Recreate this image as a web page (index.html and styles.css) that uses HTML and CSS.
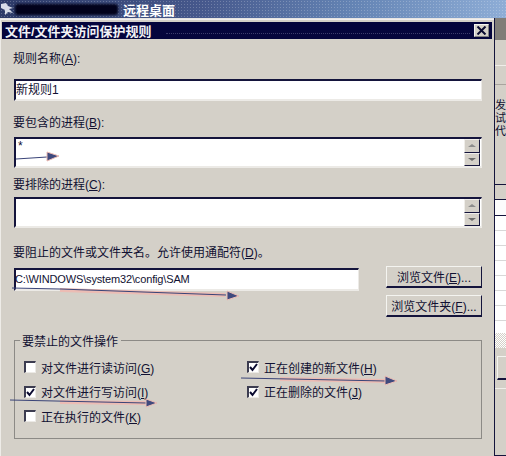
FILE: index.html
```html
<!DOCTYPE html>
<html>
<head>
    <title>文件/文件夹访问保护规则</title>
    <meta name="viewport" content="width=device-width, initial-scale=1.0">
    <link rel="stylesheet" href="styles.css">
</head>
<body>
    <div class="screen">
        <div class="remote-bar">
            <svg class="remote-icon" width="15" height="18" viewBox="0 0 15 18">
                <path d="M1 4 L6 3 L8 6 L13 8 L9 9 L13 13 L8 12 L5 15 L5 10 L1 8 Z" fill="#d8dce8"/>
            </svg>
            <div class="remote-host"></div>
            <span class="remote-title">远程桌面</span>
        </div>

        <div class="desktop">
            <div class="dialog">
                <div class="titlebar">
                    <span class="titlebar-text">文件/文件夹访问保护规则</span>
                    <span class="titlebar-dots"></span>
                    <span class="close-btn">
                        <svg width="11" height="9" viewBox="0 0 11 9">
                            <path d="M1.5 0.5 L9.5 8.5 M9.5 0.5 L1.5 8.5" stroke="#0a0a30" stroke-width="2" fill="none"/>
                        </svg>
                    </span>
                </div>

                <div class="form">
                    <div class="label label-name">规则名称(<u>A</u>):</div>
                    <div class="field field-single">新规则1</div>

                    <div class="label label-include">要包含的进程(<u>B</u>):</div>
                    <div class="field field-multi">
                        <span class="field-text">*</span>
                        <div class="scroll">
                            <span class="scroll-btn"><i class="arrow-up"></i></span>
                            <span class="scroll-btn"><i class="arrow-down"></i></span>
                        </div>
                    </div>

                    <div class="label label-exclude">要排除的进程(<u>C</u>):</div>
                    <div class="field field-multi field-exclude">
                        <span class="field-text"></span>
                        <div class="scroll">
                            <span class="scroll-btn"><i class="arrow-up"></i></span>
                            <span class="scroll-btn"><i class="arrow-down"></i></span>
                        </div>
                    </div>

                    <div class="label label-path">要阻止的文件或文件夹名。允许使用通配符(<u>D</u>)。</div>
                    <div class="path-row">
                        <div class="field field-path">C:\WINDOWS\system32\config\SAM</div>
                        <div class="browse">
                            <button class="btn">浏览文件(<u>E</u>)...</button>
                            <button class="btn">浏览文件夹(<u>F</u>)...</button>
                        </div>
                    </div>

                    <div class="group">
                        <span class="legend">要禁止的文件操作</span>
                        <div class="checks">
                            <div class="check-item"><span class="check"></span><span>对文件进行读访问(<u>G</u>)</span></div>
                            <div class="check-item"><span class="check checked"><svg width="9" height="9" viewBox="0 0 9 9"><path d="M1 4 L3.5 7 L8 1" stroke="#0a0a30" stroke-width="2" fill="none"/></svg></span><span>正在创建的新文件(<u>H</u>)</span></div>
                            <div class="check-item"><span class="check checked"><svg width="9" height="9" viewBox="0 0 9 9"><path d="M1 4 L3.5 7 L8 1" stroke="#0a0a30" stroke-width="2" fill="none"/></svg></span><span>对文件进行写访问(<u>I</u>)</span></div>
                            <div class="check-item"><span class="check checked"><svg width="9" height="9" viewBox="0 0 9 9"><path d="M1 4 L3.5 7 L8 1" stroke="#0a0a30" stroke-width="2" fill="none"/></svg></span><span>正在删除的文件(<u>J</u>)</span></div>
                            <div class="check-item"><span class="check"></span><span>正在执行的文件(<u>K</u>)</span></div>
                        </div>
                    </div>
                </div>
            </div>

            <div class="side">
                <div class="side-title"></div>
                <div class="side-tabs"></div>
                <div class="side-rule"></div>
                <div class="side-text">发<br>试<br>代</div>
                <div class="side-head"></div>
                <div class="side-input"></div>
                <div class="side-list"></div>
                <div class="side-hatch"></div>
                <div class="side-btn"></div>
                <div class="side-foot"></div>
            </div>
        </div>

        <!-- hand drawn arrows on top of the screenshot -->
        <svg class="marks" width="506" height="456" viewBox="0 0 506 456">
            <g class="halo">
                <path d="M60 290 L225 295"/>
                <path d="M60 402 L145 403"/>
                <path d="M280 379 L385 381"/>
            </g>
            <g class="ink">
                <path d="M16 159 L47 157"/>
                <path d="M12 288 L60 289 L226 295"/>
                <path d="M10 400 L146 403"/>
                <path d="M241 378 L386 381"/>
            </g>
            <g class="head">
                <path d="M47 152 L59 156 L47 161 Z"/>
                <path d="M227 291 L239 296 L227 300 Z"/>
                <path d="M146 399 L157 403 L146 407 Z"/>
                <path d="M385 376 L397 381 L385 385 Z"/>
            </g>
        </svg>
    </div>
</body>
</html>
```

FILE: styles.css
```css
* {
    margin: 0;
    padding: 0;
    box-sizing: border-box;
}

body {
    font-family: "Liberation Sans", "Noto Sans CJK SC", sans-serif;
    font-size: 12px;
    color: #111132;
    background: #d4d0c8;
    overflow: hidden;
}

.screen {
    position: relative;
    width: 506px;
    height: 456px;
    overflow: hidden;
}

/* remote desktop strip */
.remote-bar {
    display: flex;
    align-items: center;
    height: 18px;
    background-image:
        radial-gradient(rgba(255, 255, 255, 0.22) 0.6px, transparent 0.8px),
        linear-gradient(to right, #2d3a68 0%, #46588c 40%, #6484b4 70%, #8eadd6 100%);
    background-size: 3px 3px, 100% 100%;
}

.remote-icon {
    flex: none;
}

.remote-host {
    width: 103px;
    height: 11px;
    background: #02021c;
    border-radius: 3px;
    filter: blur(1px);
}

.remote-title {
    margin-left: 5px;
    font-size: 13px;
    font-weight: bold;
    color: #fff;
}

.desktop {
    display: flex;
    height: 438px;
    background: #e6e4e2;
}

/* dialog */
.dialog {
    width: 494px;
    margin-top: 1px;
    padding: 2px 2px 0 3px;
    background: #d4d0c8;
    border-top: 1px solid #f0eeee;
    border-left: 1px solid #eeece8;
}

.titlebar {
    display: flex;
    align-items: center;
    height: 17px;
    margin: 0 0 0 -2px;
    padding: 0 3px 0 3px;
    background: #05053c;
}

.titlebar-text {
    font-size: 13px;
    font-weight: bold;
    color: #f2f2f6;
    white-space: nowrap;
}

.titlebar-dots {
    flex: 1;
    height: 1px;
    margin: 5px 4px 0 14px;
    border-top: 1px dotted #3c3c6c;
}

.close-btn {
    display: flex;
    align-items: center;
    justify-content: center;
    width: 15px;
    height: 13px;
    background: #d4d0c8;
    border-top: 1px solid #f4f4f0;
    border-left: 1px solid #f4f4f0;
    border-right: 1px solid #808080;
    border-bottom: 1px solid #808080;
}

.form {
    padding-left: 9px;
}

.label {
    height: 14px;
    line-height: 16px;
    white-space: nowrap;
}

.label-name {
    margin-top: 12px;
}

.label-include {
    margin-top: 14px;
}

.label-exclude {
    margin-top: 9px;
}

.label-path {
    margin-top: 17px;
}

.field {
    width: 468px;
    margin-left: 1px;
    background: #fff;
    border-top: 2px solid #14143c;
    border-left: 2px solid #14143c;
    border-right: 1px solid #eceae6;
    border-bottom: 2px solid #eceae6;
    line-height: 18px;
    padding-left: 0;
}

.field-single {
    height: 22px;
    margin-top: 14px;
}

.field-multi {
    display: flex;
    justify-content: space-between;
    height: 31px;
    margin-top: 8px;
}

.field-exclude {
    margin-top: 6px;
}

.field-text {
    line-height: 14px;
    padding-left: 2px;
}

.scroll {
    display: flex;
    flex-direction: column;
    width: 16px;
    margin-right: 1px;
}

.scroll-btn {
    display: flex;
    align-items: center;
    justify-content: center;
    flex: 1;
    background: #d4d0c8;
    border-top: 1px solid #f0eeea;
    border-left: 1px solid #f0eeea;
    border-right: 1px solid #14143c;
    border-bottom: 1px solid #14143c;
}

.arrow-up {
    border-left: 4px solid transparent;
    border-right: 4px solid transparent;
    border-bottom: 3px solid #8c8c8c;
}

.arrow-down {
    border-left: 4px solid transparent;
    border-right: 4px solid transparent;
    border-top: 3px solid #6c6c6c;
}

.path-row {
    display: flex;
    align-items: flex-start;
    margin-top: 7px;
}

.field-path {
    width: 345px;
    height: 23px;
    margin-top: 2px;
    flex: none;
    font-size: 11px;
    letter-spacing: -0.15px;
    text-indent: -1px;
    white-space: nowrap;
}

.browse {
    display: flex;
    flex-direction: column;
    gap: 7px;
    margin-left: 27px;
}

.btn {
    width: 96px;
    height: 22px;
    font-family: inherit;
    font-size: 12px;
    color: #111132;
    white-space: nowrap;
    background: #d4d0c8;
    border-top: 1px solid #f4f4f0;
    border-left: 1px solid #f4f4f0;
    border-right: 1px solid #14143c;
    border-bottom: 2px solid #14143c;
}

.group {
    position: relative;
    width: 468px;
    height: 99px;
    margin: 23px 0 0 1px;
    border: 1px solid #8c8a86;
}

.legend {
    position: absolute;
    top: -6px;
    left: 5px;
    padding: 0 3px 0 2px;
    background: #d4d0c8;
    line-height: 14px;
}

.checks {
    display: grid;
    grid-template-columns: 223px 1fr;
    grid-auto-rows: 24.5px;
    padding: 14px 0 0 9px;
}

.check-item {
    display: flex;
    align-items: center;
    gap: 5px;
    white-space: nowrap;
}

.check-item:nth-child(5) {
    grid-column: 1;
}

.check {
    display: flex;
    align-items: center;
    justify-content: center;
    flex: none;
    width: 12px;
    height: 12px;
    background: #fff;
    border-top: 2px solid #3c3c50;
    border-left: 2px solid #3c3c50;
    border-right: 1px solid #eceae6;
    border-bottom: 1px solid #eceae6;
}

/* window behind the dialog, cut off at the edge */
.side {
    flex: 1;
    display: flex;
    flex-direction: column;
    border-left: 1px solid #14143c;
    background: #d4d0c8;
    overflow: hidden;
}

.side-title {
    height: 22px;
    background: #807d78;
}

.side-tabs {
    height: 26px;
    border-bottom: 1px solid #f0eeea;
}

.side-rule {
    height: 19px;
    margin-bottom: 14px;
    border-bottom: 1px solid #a8a49e;
}

.side-text {
    height: 85px;
    font-size: 11px;
    line-height: 13px;
    white-space: nowrap;
}

.side-head {
    height: 16px;
    border-top: 1px solid #14143c;
    border-bottom: 1px solid #14143c;
}

.side-input {
    height: 16px;
    background: #fcfcfc;
    border-bottom: 1px solid #14143c;
}

.side-list {
    height: 117px;
    background: repeating-linear-gradient(to bottom, #fff 0, #fff 14px, #d8d8d8 14px, #d8d8d8 15px);
}

.side-hatch {
    height: 15px;
    background: repeating-conic-gradient(#d4d0c8 0 25%, #fff 0 50%) 0 0 / 2px 2px;
}

.side-btn {
    height: 24px;
    margin: 8px 0 0 2px;
    border-top: 1px solid #f4f4f0;
    border-left: 1px solid #f4f4f0;
    border-bottom: 2px solid #14143c;
}

.side-foot {
    flex: 1;
    margin-top: 8px;
    border-top: 1px solid #f0eeea;
    border-bottom: 1px solid #14143c;
}

/* annotation arrows */
.marks {
    position: absolute;
    top: 0;
    left: 0;
    pointer-events: none;
}

.halo path {
    fill: none;
    stroke: #ecbcb4;
    stroke-width: 4;
}

.ink path {
    fill: none;
    stroke: #3a4478;
    stroke-width: 1;
}

.head path {
    fill: #3f4a7e;
    stroke: #ecbcb4;
    stroke-width: 1;
}
```
